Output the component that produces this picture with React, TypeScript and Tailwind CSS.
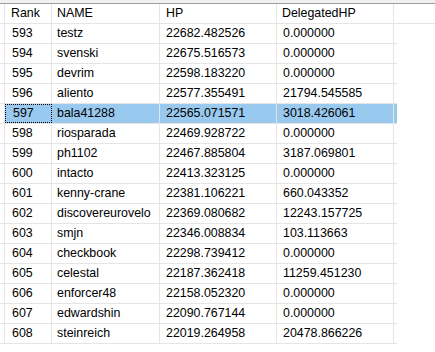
import React from 'react';

type Row = { rank: number; name: string; hp: string; dhp: string };

const rows: Row[] = [
  { rank: 593, name: 'testz', hp: '22682.482526', dhp: '0.000000' },
  { rank: 594, name: 'svenski', hp: '22675.516573', dhp: '0.000000' },
  { rank: 595, name: 'devrim', hp: '22598.183220', dhp: '0.000000' },
  { rank: 596, name: 'aliento', hp: '22577.355491', dhp: '21794.545585' },
  { rank: 597, name: 'bala41288', hp: '22565.071571', dhp: '3018.426061' },
  { rank: 598, name: 'riosparada', hp: '22469.928722', dhp: '0.000000' },
  { rank: 599, name: 'ph1102', hp: '22467.885804', dhp: '3187.069801' },
  { rank: 600, name: 'intacto', hp: '22413.323125', dhp: '0.000000' },
  { rank: 601, name: 'kenny-crane', hp: '22381.106221', dhp: '660.043352' },
  { rank: 602, name: 'discovereurovelo', hp: '22369.080682', dhp: '12243.157725' },
  { rank: 603, name: 'smjn', hp: '22346.008834', dhp: '103.113663' },
  { rank: 604, name: 'checkbook', hp: '22298.739412', dhp: '0.000000' },
  { rank: 605, name: 'celestal', hp: '22187.362418', dhp: '11259.451230' },
  { rank: 606, name: 'enforcer48', hp: '22158.052320', dhp: '0.000000' },
  { rank: 607, name: 'edwardshin', hp: '22090.767144', dhp: '0.000000' },
  { rank: 608, name: 'steinreich', hp: '22019.264958', dhp: '20478.866226' },
];

const SELECTED = 597;

export default function App() {
  return (
    <div
      className="w-[435px] h-[352px] bg-white text-black text-[12.4px] overflow-hidden"
      style={{ fontFamily: '"Liberation Sans", Arial, sans-serif' }}
    >
      <div className="h-[3px] bg-[#f0f0f0]" />
      <div className="h-px bg-[#a0a0a0]" />

      {/* header */}
      <div className="flex h-[20px] border-b border-[#e5e5e5]">
        <div className="w-[5px] border-r border-[#e5e5e5]" />
        <div className="w-[47px] pl-[6px] flex items-center border-r border-[#e5e5e5]">Rank</div>
        <div className="w-[108px] pl-[5px] flex items-center border-r border-[#e5e5e5]">NAME</div>
        <div className="w-[117px] pl-[6px] flex items-center border-r border-[#e5e5e5]">HP</div>
        <div className="w-[117px] pl-[5px] flex items-center border-r border-[#e5e5e5]">DelegatedHP</div>
      </div>

      {rows.map((r) => {
        const sel = r.rank === SELECTED;
        return (
          <div key={r.rank} className="flex h-[20px]">
            <div className="w-[5px] border-r border-b border-[#e5e5e5]" />
            <div className={`w-[392px] flex border-b border-[#e5e5e5] ${sel ? 'bg-[#99c9ef]' : ''}`}>
              <div
                className={`w-[47px] pl-[7px] flex items-center ${
                  sel ? 'border border-dotted border-black' : 'border-r border-[#e5e5e5]'
                }`}
              >
                {r.rank}
              </div>
              <div className="w-[108px] pl-[5px] flex items-center border-r border-[#e5e5e5]">{r.name}</div>
              <div className="w-[117px] pl-[6px] flex items-center border-r border-[#e5e5e5]">{r.hp}</div>
              <div className="w-[117px] pl-[6px] flex items-center border-r border-[#e5e5e5]">{r.dhp}</div>
            </div>
          </div>
        );
      })}
    </div>
  );
}
